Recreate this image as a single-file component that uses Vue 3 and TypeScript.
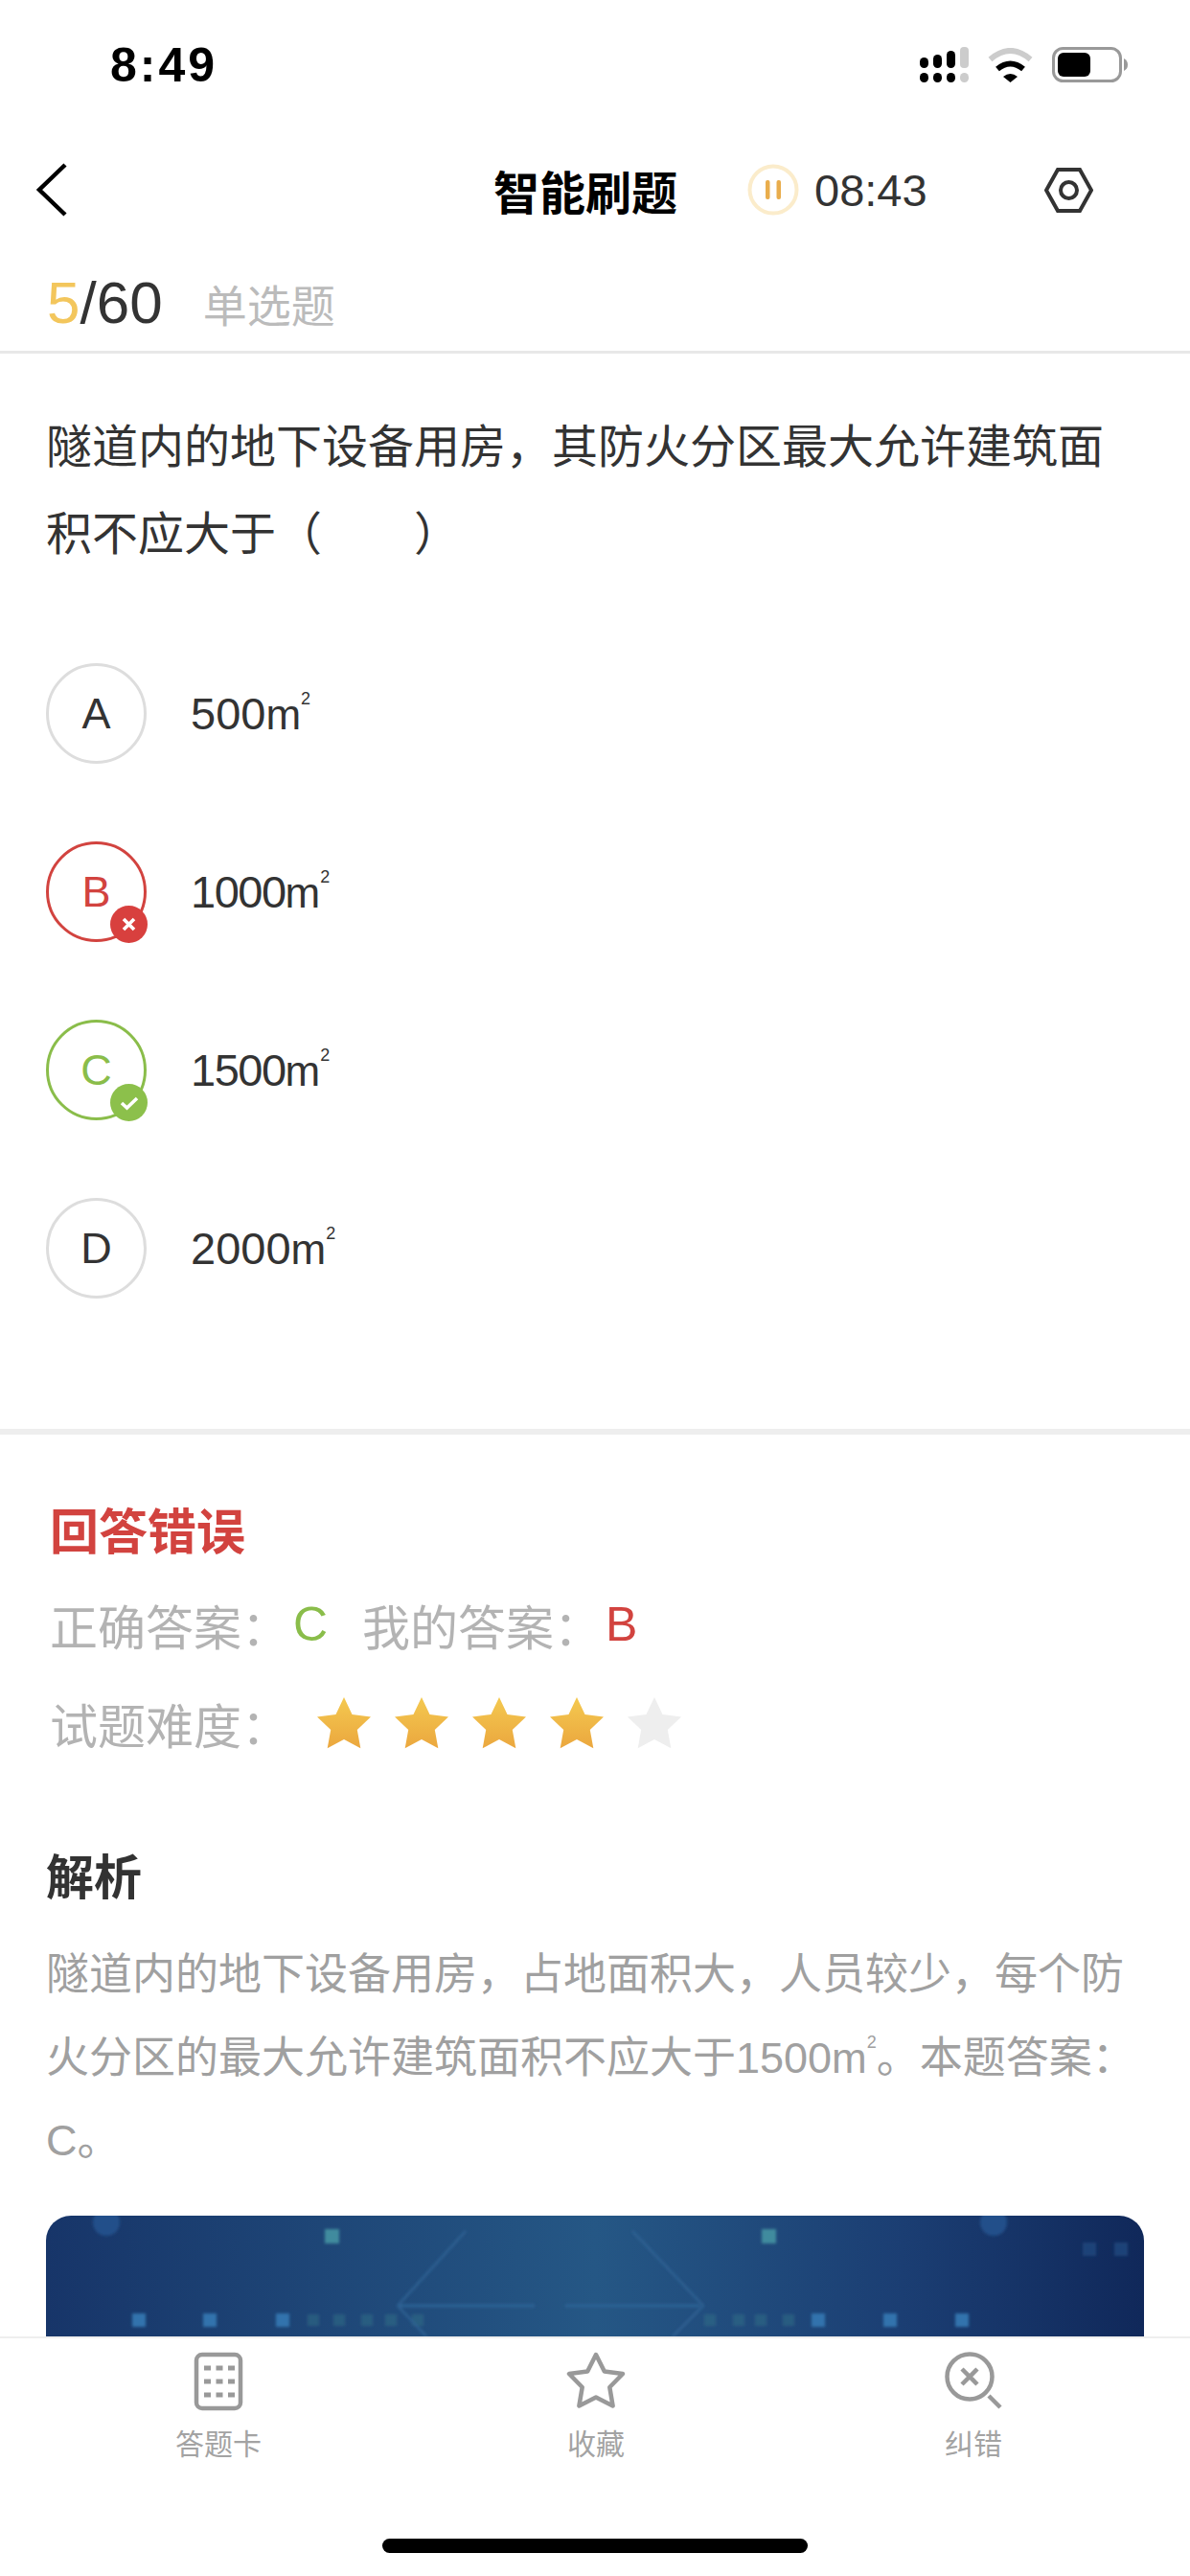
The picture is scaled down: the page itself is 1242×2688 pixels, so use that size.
<script setup lang="ts">
// 选项状态：wrong / right 时右下角带角标
const options = [
  { key: "A", value: "500", state: "" },
  { key: "B", value: "1000", state: "wrong" },
  { key: "C", value: "1500", state: "right" },
  { key: "D", value: "2000", state: "" },
];

const stars = [true, true, true, true, false];

const starPath =
  "M28 1 L36.5 19 L56 21.5 L41.8 35 L45.3 54.3 L28 45 L10.7 54.3 L14.2 35 L0 21.5 L19.5 19 Z";

const signalCols = [
  { x: 0, h: 11 },
  { x: 14, h: 14 },
  { x: 28, h: 18 },
];

const brightDots = [138, 212, 288, 847, 922, 997];
const dimDots = [321, 348, 377, 402, 430, 735, 765, 788, 817];
</script>

<template>
  <div class="page">
    <div class="status">
      <span class="clock">8:49</span>
      <div class="status-icons">
        <svg width="51" height="37" viewBox="0 0 51 37">
          <g fill="#000">
            <template v-for="col in signalCols" :key="col.x">
              <rect :x="col.x" :y="22 - col.h" width="9" :height="col.h" rx="4.5" />
              <rect :x="col.x" y="27" width="9" height="10" rx="4.5" />
            </template>
          </g>
          <rect x="42" y="0" width="9" height="22" rx="4" fill="#ccc" />
          <rect x="42" y="27" width="9" height="10" rx="4.5" fill="#ccc" />
        </svg>
        <svg width="47" height="36" viewBox="0 0 47 36">
          <path d="M2.5 12 Q23.5 -6 44.5 12" fill="none" stroke="#ccc" stroke-width="6" />
          <path d="M10 22 Q23.5 11 37 22" fill="none" stroke="#000" stroke-width="6" />
          <path d="M16 30 Q23.5 24 31 30 L23.5 36 Z" fill="#000" />
        </svg>
        <svg width="80" height="37" viewBox="0 0 80 37">
          <rect x="1.5" y="1.5" width="70" height="34" rx="10" fill="none" stroke="#999" stroke-width="3" />
          <rect x="6" y="6" width="34" height="25" rx="6" fill="#000" />
          <path d="M75 12 Q79 14 79 18.5 Q79 23 75 25 Z" fill="#999" />
        </svg>
      </div>
    </div>

    <div class="nav">
      <svg class="back" width="33" height="56" viewBox="0 0 33 56">
        <path d="M31 2 L4 28 L31 54" fill="none" stroke="#000" stroke-width="4.5" />
      </svg>
      <span class="title">智能刷题</span>
      <svg class="pause" width="54" height="54" viewBox="0 0 54 54">
        <circle cx="27" cy="27" r="24.5" fill="#fff" stroke="#fbeccb" stroke-width="4" />
        <rect x="19" y="17" width="4.5" height="20" rx="2" fill="#e9ad4c" />
        <rect x="30.5" y="17" width="4.5" height="20" rx="2" fill="#e9ad4c" />
      </svg>
      <span class="timer">08:43</span>
      <svg class="hex" width="51" height="47" viewBox="0 0 51 47">
        <path d="M14 2 H37 L49 23.5 L37 45 H14 L2 23.5 Z" fill="none" stroke="#333" stroke-width="4" />
        <circle cx="25.5" cy="23.5" r="8.5" fill="none" stroke="#333" stroke-width="4" />
      </svg>
    </div>

    <div class="sub">
      <span class="progress"><em>5</em>/60</span>
      <span class="kind">单选题</span>
    </div>

    <p class="question">隧道内的地下设备用房，其防火分区最大允许建筑面积不应大于（　　）</p>

    <div class="options">
      <div v-for="opt in options" :key="opt.key" class="option">
        <div class="letter" :class="opt.state">
          {{ opt.key }}
          <svg v-if="opt.state === 'wrong'" class="badge" width="39" height="39" viewBox="0 0 39 39">
            <circle cx="19.5" cy="19.5" r="19.5" fill="#d8403e" />
            <path d="M14 14 L25 25 M25 14 L14 25" stroke="#fff" stroke-width="3.6" />
          </svg>
          <svg v-if="opt.state === 'right'" class="badge" width="39" height="39" viewBox="0 0 39 39">
            <circle cx="19.5" cy="19.5" r="19.5" fill="#8cc04b" />
            <path d="M12 20 L17.5 25 L28 15" fill="none" stroke="#fff" stroke-width="3.6" />
          </svg>
        </div>
        <span class="value" :class="{ tight: opt.value.startsWith('1') }">{{ opt.value }}<span class="unit">m<sup>2</sup></span></span>
      </div>
    </div>

    <div class="thick-line"></div>

    <div class="result">
      <div class="verdict">回答错误</div>
      <div class="line">
        <span>正确答案：</span><span class="ans green">C</span>
        <span class="second">我的答案：</span><span class="ans red">B</span>
      </div>
      <div class="line level">
        <span>试题难度：</span>
        <div class="stars">
          <svg width="56" height="56" viewBox="0 0 56 56" v-for="(on, i) in stars" :key="i">
            <defs>
              <linearGradient :id="'gold' + i" x1="0" y1="0" x2="0" y2="1">
                <stop offset="0" stop-color="#f4c950" />
                <stop offset="1" stop-color="#eba73e" />
              </linearGradient>
            </defs>
            <path :d="starPath" :fill="on ? 'url(#gold' + i + ')' : '#eeeeee'" />
          </svg>
        </div>
      </div>
    </div>

    <div class="analysis">
      <h3>解析</h3>
      <p>隧道内的地下设备用房，占地面积大，人员较少，每个防火分区的最大允许建筑面积不应大于1500<span class="unit">m<sup>2</sup></span>。本题答案：C。</p>
      <svg class="banner" width="1146" height="126" viewBox="0 0 1146 126">
        <defs>
          <linearGradient id="bannerBg" x1="0" y1="0" x2="1" y2="0">
            <stop offset="0" stop-color="#173569" />
            <stop offset="0.5" stop-color="#255785" />
            <stop offset="0.78" stop-color="#1b3e73" />
            <stop offset="1" stop-color="#10285a" />
          </linearGradient>
          <filter id="soft"><feGaussianBlur stdDeviation="1.5" /></filter>
        </defs>
        <rect width="1146" height="126" fill="url(#bannerBg)" />
        <g filter="url(#soft)">
          <circle cx="63" cy="7" r="14" fill="#204f8a" />
          <circle cx="989" cy="7" r="14" fill="#204f8a" />
          <rect x="291" y="14" width="15" height="15" fill="#3f8b9e" />
          <rect x="747" y="14" width="15" height="15" fill="#3f8b9e" />
          <rect x="1082" y="28" width="14" height="14" fill="#1f4378" />
          <rect x="1115" y="28" width="14" height="14" fill="#1f4378" />
          <rect v-for="x in brightDots" :key="x" :x="x - 48" y="102" width="14" height="14" fill="#3273ad" />
          <rect v-for="x in dimDots" :key="x" :x="x - 48" y="103" width="12" height="12" fill="#2f7188" opacity="0.5" />
          <path
            d="M367 94 L438 16 M367 94 L397 126 M612 16 L686 94 L654 126"
            fill="none"
            stroke="#2f6395"
            stroke-width="2"
          />
          <path d="M368 94 H510 M542 94 H682" fill="none" stroke="#2f6395" stroke-width="3" />
        </g>
      </svg>
    </div>

    <div class="tabbar">
      <div class="tab">
        <svg width="52" height="62" viewBox="0 0 52 62">
          <rect x="3" y="3" width="46" height="56" rx="6" fill="none" stroke="#999" stroke-width="4.5" />
          <g stroke="#999" stroke-width="5" stroke-dasharray="7 5.5" fill="none">
            <path d="M11 17 H43" />
            <path d="M11 31 H43" />
            <path d="M11 45 H43" />
          </g>
        </svg>
        <span>答题卡</span>
      </div>
      <div class="tab">
        <svg width="62" height="62" viewBox="0 0 62 62">
          <path
            d="M31 3 L39.8 20.5 L59 23 L45.3 37 L48.6 56.5 L31 47.5 L13.4 56.5 L16.7 37 L3 23 L22.2 20.5 Z"
            fill="none"
            stroke="#999"
            stroke-width="4.5"
            stroke-linejoin="round"
          />
        </svg>
        <span>收藏</span>
      </div>
      <div class="tab">
        <svg width="60" height="62" viewBox="0 0 60 62">
          <circle cx="26" cy="26" r="23.5" fill="none" stroke="#999" stroke-width="4.5" />
          <path d="M18 18 L34 34 M34 18 L18 34" stroke="#999" stroke-width="4.5" />
          <path d="M46 46 L58 58" stroke="#999" stroke-width="4.5" />
        </svg>
        <span>纠错</span>
      </div>
      <div class="home-bar"></div>
    </div>
  </div>
</template>

<style>
html,
body {
  margin: 0;
  background: #fff;
}
</style>

<style scoped>
.page {
  position: relative;
  width: 1242px;
  height: 2688px;
  overflow: hidden;
  background: #fff;
  color: #333;
  font-family: "Liberation Sans", "Noto Sans CJK SC", sans-serif;
}

.status {
  height: 135px;
  display: flex;
  align-items: center;
  justify-content: space-between;
  padding: 0 64px 0 115px;
  box-sizing: border-box;
}
.clock {
  font-size: 50px;
  font-weight: 700;
  letter-spacing: 3px;
  color: #000;
}
.status-icons {
  display: flex;
  align-items: center;
  gap: 20px;
}

.nav {
  height: 126px;
  display: flex;
  align-items: center;
  padding-left: 37px;
}
.title {
  margin-left: 445px;
  font-size: 48px;
  font-weight: 700;
  color: #000;
  white-space: nowrap;
}
.pause {
  margin-left: 73px;
}
.timer {
  margin-left: 16px;
  font-size: 47px;
}
.hex {
  margin-left: 122px;
}

.sub {
  height: 108px;
  display: flex;
  align-items: center;
  padding: 4px 0 0 49px;
  box-sizing: border-box;
  border-bottom: 3px solid #e8e8e8;
}
.progress {
  font-size: 62px;
}
.progress em {
  font-style: normal;
  color: #f3c65c;
}
.kind {
  margin-left: 42px;
  font-size: 46px;
  color: #bbb;
}

.question {
  margin: 52px 48px 0;
  font-size: 48px;
  line-height: 91px;
}

.options {
  margin-top: 89px;
  padding-left: 48px;
  display: flex;
  flex-direction: column;
  gap: 81px;
}
.option {
  display: flex;
  align-items: center;
  gap: 46px;
}
.letter {
  position: relative;
  width: 105px;
  height: 105px;
  box-sizing: border-box;
  border: 3px solid #ddd;
  border-radius: 50%;
  display: flex;
  align-items: center;
  justify-content: center;
  font-size: 45px;
}
.letter.wrong {
  border-color: #d2433f;
  color: #d2433f;
}
.letter.right {
  border-color: #8abd4a;
  color: #8abd4a;
}
.badge {
  position: absolute;
  right: -4px;
  bottom: -4px;
}
.value {
  font-size: 47px;
}
.value.tight {
  letter-spacing: -1.5px;
}
.unit {
  font-size: 44px;
  letter-spacing: 0;
}
.unit sup {
  font-size: 18px;
  line-height: 0;
  vertical-align: 26px;
}

.thick-line {
  height: 6px;
  margin-top: 136px;
  background: #eee;
}

.result {
  padding: 68px 0 0 52px;
}
.verdict {
  font-size: 51px;
  font-weight: 700;
  line-height: 70px;
  color: #d2433f;
}
.line {
  margin-top: 25px;
  display: flex;
  align-items: center;
  height: 70px;
  font-size: 50px;
  color: #b3b3b3;
}
.level {
  margin-top: 33px;
}
.ans {
  margin-left: 4px;
}
.green {
  color: #8abd4a;
}
.red {
  color: #d2433f;
}
.second {
  margin-left: 36px;
}
.stars {
  display: flex;
  gap: 25px;
  margin-left: 29px;
}

.analysis {
  margin-top: 92px;
  padding: 0 48px;
}
.analysis h3 {
  margin: 0;
  font-size: 50px;
  line-height: 70px;
  font-weight: 700;
  color: #333;
}
.analysis p {
  margin: 23px 0 0;
  font-size: 45px;
  line-height: 86.5px;
  color: #a0a0a0;
}
.banner {
  display: block;
  margin-top: 34px;
  border-radius: 26px 26px 0 0;
}

.tabbar {
  position: absolute;
  left: 0;
  right: 0;
  top: 2438px;
  bottom: 0;
  display: flex;
  padding: 14px 29px 0 31px;
  box-sizing: border-box;
  background: #fff;
  border-top: 2px solid #eee;
}
.tab {
  flex: 1;
  display: flex;
  flex-direction: column;
  align-items: center;
  gap: 17px;
}
.tab svg {
  display: block;
}
.tab span {
  font-size: 30px;
  line-height: 36px;
  color: #a3a3a3;
}
.home-bar {
  position: absolute;
  left: 399px;
  bottom: 24px;
  width: 444px;
  height: 15px;
  border-radius: 8px;
  background: #000;
}
</style>
